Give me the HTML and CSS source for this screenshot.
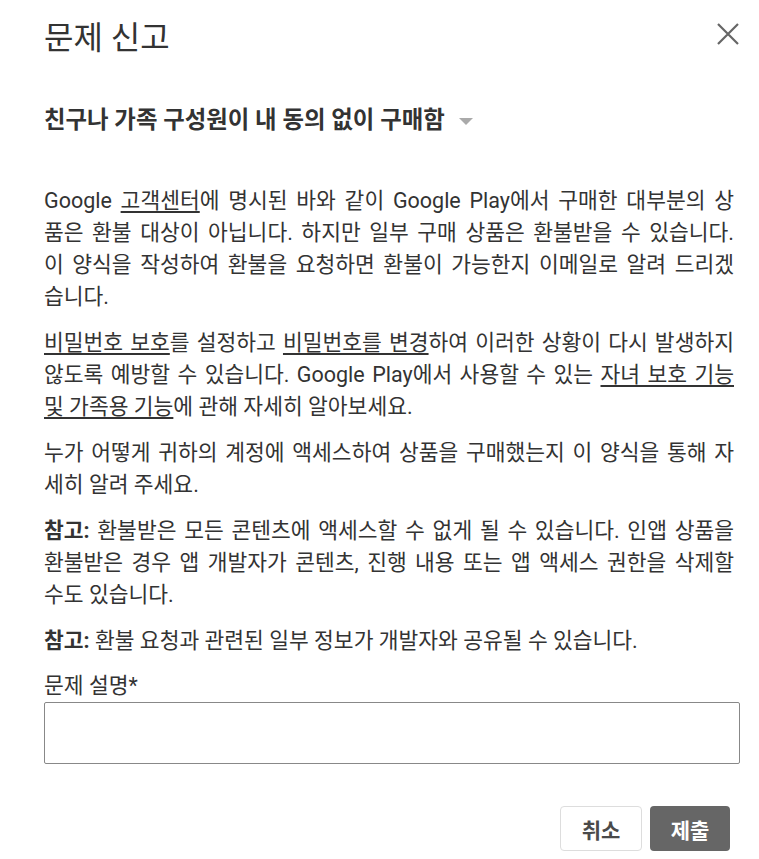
FILE: index.html
```html
<!DOCTYPE html>
<html lang="ko">
<head>
    <meta charset="UTF-8">
    <meta name="viewport" content="width=device-width, initial-scale=1.0">
    <title>문제 신고</title>
    <link rel="stylesheet" href="styles.css">
</head>
<body>
    <div class="dialog">
        <div class="dialog-header">
            <h1>문제 신고</h1>
            <button class="close-btn" aria-label="닫기">
                <svg width="24" height="24" viewBox="0 0 24 24">
                    <path d="M2 2L22 22M22 2L2 22" stroke="#666" stroke-width="2.2" fill="none"/>
                </svg>
            </button>
        </div>

        <!-- 문제 유형 선택 -->
        <div class="issue-select">
            <span>친구나 가족 구성원이 내 동의 없이 구매함</span>
            <span class="caret"></span>
        </div>

        <div class="content">
            <p>
                <span class="ln">Google <a href="#">고객센터</a>에 명시된 바와 같이 Google Play에서 구매한 대부분의 상</span>
                <span class="ln">품은 환불 대상이 아닙니다. 하지만 일부 구매 상품은 환불받을 수 있습니다.</span>
                <span class="ln">이 양식을 작성하여 환불을 요청하면 환불이 가능한지 이메일로 알려 드리겠</span>
                습니다.
            </p>
            <p>
                <span class="ln"><a href="#">비밀번호 보호</a>를 설정하고 <a href="#">비밀번호를 변경</a>하여 이러한 상황이 다시 발생하지</span>
                <span class="ln">않도록 예방할 수 있습니다. Google Play에서 사용할 수 있는 <a href="#">자녀 보호 기능</a></span>
                <a href="#">및 가족용 기능</a>에 관해 자세히 알아보세요.
            </p>
            <p>
                <span class="ln">누가 어떻게 귀하의 계정에 액세스하여 상품을 구매했는지 이 양식을 통해 자</span>
                세히 알려 주세요.
            </p>
            <p>
                <span class="ln"><b>참고:</b> 환불받은 모든 콘텐츠에 액세스할 수 없게 될 수 있습니다. 인앱 상품을</span>
                <span class="ln">환불받은 경우 앱 개발자가 콘텐츠, 진행 내용 또는 앱 액세스 권한을 삭제할</span>
                수도 있습니다.
            </p>
            <p><b>참고:</b> 환불 요청과 관련된 일부 정보가 개발자와 공유될 수 있습니다.</p>
        </div>

        <label class="field-label" for="desc">문제 설명*</label>
        <textarea id="desc" class="field"></textarea>

        <div class="actions">
            <button class="btn btn-cancel">취소</button>
            <button class="btn btn-submit">제출</button>
        </div>
    </div>
</body>
</html>
```

FILE: styles.css
```css
/* 기본 설정 */
body {
    margin: 0;
    background: #fff;
    color: #333;
    font-family: Roboto, "Noto Sans CJK KR", sans-serif;
}

.dialog {
    padding: 18px 19px 8px 44px;
}

/* 헤더 */
.dialog-header {
    display: flex;
    justify-content: space-between;
    align-items: center;
}

h1 {
    margin: 0;
    font-size: 32px;
    font-weight: 400;
    line-height: 40px;
}

.close-btn {
    border: none;
    background: none;
    padding: 0;
    width: 24px;
    height: 24px;
    cursor: pointer;
    margin-top: -9px;
}

.close-btn svg {
    display: block;
}

/* 문제 유형 */
.issue-select {
    display: flex;
    align-items: center;
    gap: 14px;
    margin-top: 46px;
    font-size: 23.4px;
    font-weight: 700;
    line-height: 32px;
}

.caret {
    width: 0;
    height: 0;
    border-left: 7px solid transparent;
    border-right: 7px solid transparent;
    border-top: 7px solid #aaa;
    margin-top: 2px;
}

/* 본문 */
.content {
    margin-top: 49px;
    margin-right: 6px;
    font-size: 21.5px;
    line-height: 32px;
}

.content p {
    margin: 0 0 14px;
    text-align: justify;
}

.content .ln {
    display: block;
    text-align-last: justify;
}

.content a {
    color: inherit;
    text-decoration: underline;
    text-underline-offset: 3px;
}

.content b {
    font-weight: 700;
}

/* 입력란 */
.field-label {
    display: block;
    font-size: 21.5px;
    line-height: 30px;
}

.field {
    display: block;
    box-sizing: border-box;
    width: 100%;
    height: 62px;
    margin-top: 1px;
    border: 1px solid #888;
    border-radius: 2px;
    resize: none;
    font-family: inherit;
}

/* 버튼 */
.actions {
    display: flex;
    justify-content: flex-end;
    gap: 8px;
    margin-top: 42px;
    margin-right: 10px;
}

.btn {
    height: 45px;
    border-radius: 4px;
    font-family: inherit;
    font-size: 21px;
    font-weight: 700;
    cursor: pointer;
}

.btn-cancel {
    width: 82px;
    background: #fff;
    color: #4a4a4a;
    border: 1px solid #ddd;
}

.btn-submit {
    width: 80px;
    background: #666;
    color: #fff;
    border: none;
}
```
